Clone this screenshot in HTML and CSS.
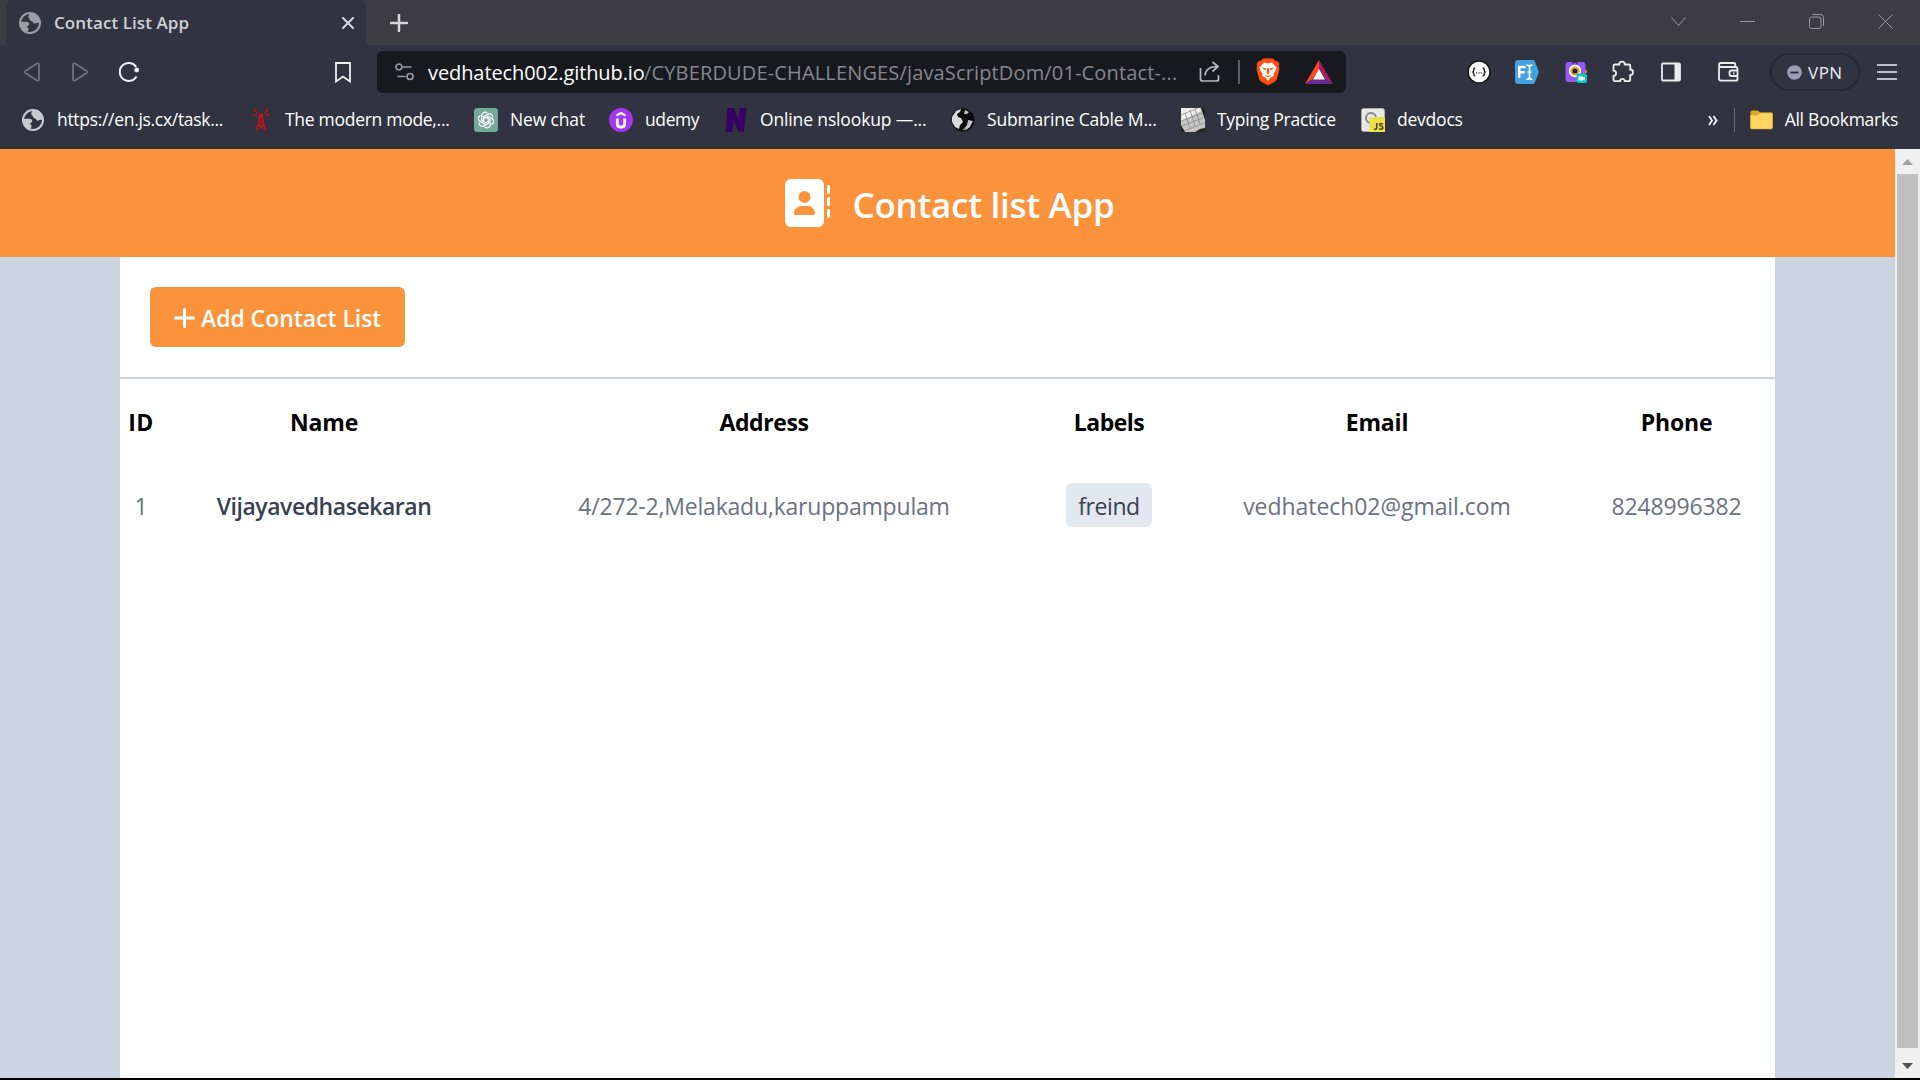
FILE: index.html
```html
<!DOCTYPE html>
<html lang="en">
<head>
<meta charset="utf-8">
<title>Contact List App</title>
<link rel="stylesheet" href="styles.css">
</head>
<body>
<svg class="defs" aria-hidden="true">
  <symbol id="globe" viewBox="0 0 22 22">
    <circle cx="11" cy="11" r="10" fill="none" stroke="currentColor" stroke-width="2"/>
    <path fill="currentColor" d="M11.6 1.4C10 2.600 9 3.500 9.300 5.200c.3 1.500 1.800 1 1.700 2.500C10.900 9.300 13.300 8.700 14 10.300c.6 1.500 2.400 1.700 3.200.9.700-.7 1.900-.5 3-.2C21.700 5.500 17.500 1.300 11.600 1.400z"/>
    <path fill="currentColor" d="M1.500 9.700h5.700c2.400 0 3.300 1.500 3.100 2.700-.2 1.300-1.900.9-2.200 2.200-.2 1.200 1.600 1.100 1.500 2.500-.1 1.400-1 2.500-2.300 2.900C2.500 18.500.800 13.500 1.500 9.700z"/>
  </symbol>
  <symbol id="petal" viewBox="0 0 24 24"><path d="M12 9.300l4.200 2.400v4.800a3.200 3.200 0 0 1-5.300 2.500" fill="none" stroke="#fff" stroke-width="1.300"/></symbol>
</svg>
<div class="browser">
  <div class="tabstrip">
    <div class="tab">
      <svg class="tab-icon"><use href="#globe"/></svg>
      <span class="tab-title">Contact List App</span>
      <svg class="tab-close" viewBox="0 0 12 12"><path d="M1 1l10 10M11 1L1 11" stroke="#d6d6da" stroke-width="2" stroke-linecap="round"/></svg>
    </div>
    <svg class="new-tab" viewBox="0 0 18 18"><path d="M9 1v16M1 9h16" stroke="#d8d8da" stroke-width="2.500" stroke-linecap="round"/></svg>
    <div class="window-controls">
      <svg viewBox="0 0 15 15"><path d="M.5 3.500l7 8 7-8"/></svg>
      <svg viewBox="0 0 15 15"><path d="M0 7.500h15"/></svg>
      <svg viewBox="0 0 15 15"><rect x=".5" y="3" width="11.500" height="11.500" rx="2"/><path d="M3.500.5h8a3 3 0 0 1 3 3v8.500"/></svg>
      <svg viewBox="0 0 15 15"><path d="M.5.5l14 14M14.500.5l-14 14"/></svg>
    </div>
  </div>

  <div class="toolbar">
    <div class="nav">
      <svg class="dim" width="16" height="20" viewBox="0 0 16 20"><path d="M15 3v14q0 2.500-2.300 1.200L1.700 11.300Q0 10 1.700 8.700l11-6.900Q15 .5 15 3z"/></svg>
      <svg class="dim" width="16" height="20" viewBox="0 0 16 20"><path d="M1 3v14q0 2.500 2.300 1.200l11-6.900q1.700-1.300 0-2.600l-11-6.900Q1 .5 1 3z"/></svg>
      <svg class="reload" width="21" height="20" viewBox="0 0 21 20"><path d="M17.200 5A9 9 0 1 0 17.500 14.500"/><circle cx="17.700" cy="8" r="2.400" fill="#f0f0f2" stroke="none"/></svg>
      <svg class="bookmark-flag" width="16" height="21" viewBox="0 0 16 21"><path d="M1 1h14v18.500l-7-5-7 5z"/></svg>
    </div>
    <div class="url">
      <svg class="perm" width="19" height="18" viewBox="0 0 19 18"><circle cx="4" cy="4" r="3"/><path d="M8 4h8.500M2.500 13.500h8"/><circle cx="15" cy="13.500" r="3"/></svg>
      <span class="host">vedhatech002.github.io</span><span class="path">/CYBERDUDE-CHALLENGES/javaScriptDom/01-Contact-...</span>
      <svg class="share" width="22" height="22" viewBox="0 0 22 22"><path d="M1.500 7v11q0 2 2 2h14q2 0 2-2v-4M6 14.500C6.500 9 10 5.500 18.500 5.500M13.500 1l5.500 4.500-5.500 5"/></svg>
      <span class="url-sep"></span>
      <svg class="lion" width="24" height="28" viewBox="0 0 24 28">
        <path fill="#ff4f0a" d="M7 .5h10l2.500 2.500h2L23.500 6l-.8 2 .8 2.500-2.500 10.500-2 2.500-7 4-7-4-2-2.500L.5 10.500 1.300 8 .5 6 2.500 3h2z"/>
        <path fill="#fff" d="M8 4.500l4 1 4-1 4.500 5-1 3.500-2 2.500.3 2.500-3.300 1.500-2.500 3.500-2.500-3.500-3.300-1.500.3-2.500-2-2.500-1-3.500z"/>
        <path fill="#ff4f0a" d="M5.500 9.500l4.800 1-1 2zM18.500 9.500l-4.800 1 1 2zM11.200 10h1.600l.5 5-1.300 1.500-1.300-1.500zM8 16.500l4 1.500 4-1.500-4 3z"/>
      </svg>
      <svg class="bat" width="28" height="24" viewBox="0 0 28 24"><path fill="#ff4724" d="M14 0v10L8 19 0 24z"/><path fill="#9e1f63" d="M14 0l14 24-8-5-6-9z"/><path fill="#662d91" d="M0 24l8-5h12l8 5z"/><path fill="#fff" d="M14 9l6 10.500H8z"/></svg>
    </div>
    <div class="extensions">
      <svg width="24" height="24" viewBox="0 0 24 24"><circle cx="12" cy="12" r="11" fill="#fff" stroke="#151518" stroke-width="1.500"/><path d="M8.300 8q-1.600 0-1.600 1.700v.8q0 1.300-1.300 1.500 1.300.2 1.300 1.500v.8q0 1.700 1.600 1.700M15.700 8q1.600 0 1.600 1.700v.8q0 1.300 1.300 1.500-1.300.2-1.300 1.500v.8q0 1.700-1.600 1.700" fill="none" stroke="#222" stroke-width="1.500"/><path d="M9 12.800h1.200M11.400 12.800h1.200M13.800 12.800H15" stroke="#333" stroke-width="1.200"/></svg>
      <svg width="24" height="24" viewBox="0 0 24 24"><path fill="#43a1de" d="M3 0h14.500q1.500 0 2.200 1.300L24 12l-4.300 10.700Q19 24 17.500 24H3q-3 0-3-3V3q0-3 3-3z"/><path d="M4.200 18V7h6.500M4.200 12.300h5.500" fill="none" stroke="#fff" stroke-width="2.400"/><path d="M11.500 5q3 0 3 2v10q0 2.500-3 2.500M17.500 5q-3 0-3 2v10q0 2.500 3 2.500M12.500 12h4" fill="none" stroke="#fff" stroke-width="1.600"/></svg>
      <svg width="24" height="24" viewBox="0 0 24 24"><rect x="1.500" y="2" width="20" height="20" rx="3" fill="#9858f7"/><path d="M8.500 3.500L11 1.500l2.500 2" fill="none" stroke="#33254d" stroke-width="1.500"/><path d="M22 10v3" stroke="#f49a12" stroke-width="1.500"/><circle cx="11" cy="11" r="6.200" fill="#fff"/><circle cx="11" cy="11" r="3.600" fill="#222" stroke="#f6a21d" stroke-width="2"/><rect x="12.500" y="13.500" width="10.500" height="9.500" rx="2.500" fill="#08c9bd"/><path d="M14.500 16.500h4.500v1l2-1v4l-2-1v1h-4.500z" fill="#fff"/></svg>
      <svg class="line" width="24" height="24" viewBox="0 0 24 24"><path d="M4 4.500h4.200a2.800 2.800 0 0 1 5.600 0H18q1.200 0 1.200 1.200V9.500a2.800 2.800 0 0 1 0 5.600V20q0 1.200-1.200 1.200h-4.200a2.300 2.300 0 0 0-4.600 0H3.700q-1.200 0-1.200-1.200v-4.200a2.600 2.600 0 0 0 0-5.200V5.700Q2.500 4.500 4 4.500z"/></svg>
      <svg class="line" width="20" height="20" viewBox="0 0 20 20"><rect x="1" y="1.500" width="18" height="17" rx="1"/><path d="M13.500 1h5.500v18h-5.500z" fill="#ededf0" stroke="none"/></svg>
      <svg class="line" width="21" height="20" viewBox="0 0 21 20"><path d="M1 4.500v12q0 2.200 2.200 2.200h14.600q1.700 0 1.700-1.700V6.500Q19.500 5 18 5H2.500Q1 4.500 1 3q0-2 2-2h12.500q1.800 0 1.800 1.500V5M19.500 8.500h-6q-2 0-2 2v1.500q0 2 2 2h6M15 11.300h1.500"/></svg>
    </div>
    <div class="vpn"><svg width="15" height="15" viewBox="0 0 15 15"><circle cx="7.500" cy="7.500" r="7.300" fill="#9a9db4"/><path d="M3.500 7.500h8" stroke="#252733" stroke-width="1.800"/></svg><span>VPN</span></div>
    <svg class="menu" width="20" height="16" viewBox="0 0 20 16"><path d="M0 1h20M0 8h20M0 15h20" stroke="#ededf0" stroke-width="1.700"/></svg>
  </div>

  <div class="bookmarks">
    <div class="bm bm-task"><svg class="light"><use href="#globe" x="1" y="1" width="22" height="22"/></svg><span>https://en.js.cx/task...</span></div>
    <div class="bm bm-modern"><svg viewBox="0 0 24 24" fill="none" stroke="#c5141d"><path stroke-width="1.500" d="M11 8.500L7.500 23M13 8.500L16.500 23"/><path stroke-width="1" d="M10 13h4M9 17.500h6M10 13l5 4.500-7 4M14 13l-5 4.500 7 4"/><circle cx="12" cy="8" r="2" fill="#c5141d"/><path stroke-width="1.300" d="M8.500 5.500L5 1M15.500 5.500L19 1M7.500 8L3 6.500M16.500 8L21 6.500"/></svg><span>The modern mode,...</span></div>
    <div class="bm bm-chat"><svg viewBox="0 0 24 24"><rect width="24" height="24" rx="3.500" fill="#75a99c"/><use href="#petal"/><use href="#petal" transform="rotate(60 12 12)"/><use href="#petal" transform="rotate(120 12 12)"/><use href="#petal" transform="rotate(180 12 12)"/><use href="#petal" transform="rotate(240 12 12)"/><use href="#petal" transform="rotate(300 12 12)"/></svg><span>New chat</span></div>
    <div class="bm bm-udemy"><svg viewBox="0 0 24 24"><circle cx="12" cy="12" r="12" fill="#a435f0"/><path d="M8.300 10.500v5.200q0 3.500 3.700 3.500t3.700-3.500v-5.200" fill="none" stroke="#fff" stroke-width="2.800"/><path d="M7.500 7.500L12 5l4.500 2.500" fill="none" stroke="#fff" stroke-width="2.200"/></svg><span>udemy</span></div>
    <div class="bm bm-lookup"><svg viewBox="0 0 24 24"><path fill="#380063" d="M3.500 0H10l4.500 11L16 0h6.500L20 23.500h-5.500L9.500 13 8 24H1.500z"/></svg><span>Online nslookup —...</span></div>
    <div class="bm bm-cable"><svg viewBox="0 0 24 24"><circle cx="12" cy="12" r="11.500" fill="#0a0a0b"/><path fill="#d9d9dc" d="M1 9l4-6 5-2-1 3-3 2 1 3 3 1 2 4-3 3-1 4-4-2-3-5z"/><path fill="#c3c3c7" d="M14 2l4 2-2 2-3 0zM17 12l5 1-3 6-4 3-2-1 3-4z"/><path fill="#77777c" d="M11 22l3-3 1 3.500z"/></svg><span>Submarine Cable M...</span></div>
    <div class="bm bm-typing"><svg viewBox="0 0 24 24"><path fill="#c4c4c4" d="M0 0h24v24H0z"/><path fill="#eee" d="M0 0h19l1 3-12 6-8 4z"/><path stroke="#8a8a8a" stroke-width=".8" fill="none" d="M0 7L17 0M0 13l21-8M1 18l21-8M3 23l20-8M4 5l5 15M9 2l5 16M14 1l5 15"/><path fill="#242424" d="M20 0h4v12zM0 17l4 7H0zM14 24l5-3 5-1v4z"/></svg><span>Typing Practice</span></div>
    <div class="bm bm-docs"><svg viewBox="0 0 24 24"><rect x=".5" y=".5" width="23" height="23" rx="2" fill="#e8e8e8" stroke="#aaa"/><circle cx="10" cy="10" r="5" fill="none" stroke="#888" stroke-width="2"/><path fill="#f0dc4e" d="M8.500 9H24v15H8.500z"/><path d="M15.800 15v4.700q0 2-2.800 1.500M22 16q-3.300-1.200-3.300.5 0 1 1.600 1.500 1.700.5 1.500 2-.4 1.800-3.600.7" fill="none" stroke="#57501e" stroke-width="1.700"/></svg><span>devdocs</span></div>
    <div class="bm-end">
      <svg class="more" width="10" height="11" viewBox="0 0 10 11"><path d="M1 1l3 4.500L1 10M5.500 1l3 4.500-3 4.500" fill="none" stroke="#f0f0f2" stroke-width="1.900"/></svg>
      <span class="bm-sep"></span>
      <svg class="folder" width="23" height="20" viewBox="0 0 23 20"><path fill="#d9a526" d="M.5 2q0-1.500 1.500-1.500h6L10 2.500h11q1.500 0 1.500 1.500v13H.5z"/><path fill="#ffd55e" stroke="#dba93c" stroke-width=".6" d="M.5 6q0-1 1-1H8l2-2h11.500q1 0 1 1v13.500q0 1.500-1.500 1.500H2Q.5 19 .5 17.500z"/></svg>
      <span class="all">All Bookmarks</span>
    </div>
  </div>

  <div class="viewport">
    <div class="page">
      <header class="app-header">
        <svg width="48" height="48" viewBox="0 0 512 512" fill="#fff"><path d="M96 0C60.700 0 32 28.700 32 64v384c0 35.300 28.700 64 64 64h288c35.300 0 64-28.700 64-64V64c0-35.300-28.700-64-64-64H96zm112 288h64c44.200 0 80 35.800 80 80 0 8.800-7.200 16-16 16H144c-8.800 0-16-7.200-16-16 0-44.200 35.800-80 80-80zm-32-96a64 64 0 1 1 128 0 64 64 0 1 1-128 0zM512 80c0-8.800-7.200-16-16-16s-16 7.200-16 16v64c0 8.800 7.200 16 16 16s16-7.200 16-16V80zm-16 112c-8.800 0-16 7.200-16 16v64c0 8.800 7.200 16 16 16s16-7.200 16-16v-64c0-8.800-7.200-16-16-16zm16 144c0-8.800-7.200-16-16-16s-16 7.200-16 16v64c0 8.800 7.200 16 16 16s16-7.200 16-16v-64z"/></svg>
        <h1>Contact list App</h1>
      </header>
      <main class="container">
        <div class="actions">
          <button class="add"><svg width="21" height="20" viewBox="0 0 21 20"><path d="M10.500 1.500v17M1.500 10h18" stroke="#fff" stroke-width="3" stroke-linecap="round"/></svg><span>Add Contact List</span></button>
        </div>
        <table class="contacts">
          <colgroup><col class="c-id"><col class="c-name"><col class="c-address"><col class="c-label"><col class="c-email"><col class="c-phone"></colgroup>
          <thead><tr><th class="h-id">ID</th><th class="h-name">Name</th><th class="h-address">Address</th><th class="h-label">Labels</th><th class="h-email">Email</th><th class="h-phone">Phone</th></tr></thead>
          <tbody><tr><td>1</td><td class="name">Vijayavedhasekaran</td><td class="address">4/272-2,Melakadu,karuppampulam</td><td><span class="badge">freind</span></td><td class="email">vedhatech02@gmail.com</td><td class="phone">8248996382</td></tr></tbody>
        </table>
      </main>
    </div>
    <div class="scrollbar">
      <svg width="11" height="6" viewBox="0 0 11 6"><path d="M5.500 0L11 6H0z" fill="#a3a3a3"/></svg>
      <div class="thumb"></div>
      <svg width="11" height="6" viewBox="0 0 11 6"><path d="M0 0h11L5.500 6z" fill="#505050"/></svg>
    </div>
  </div>
</div>
</body>
</html>
```
FILE: styles.css
```css
* { box-sizing: border-box; }
body { margin: 0; font-family: "Open Sans", "Noto Sans", sans-serif; background: #000; overflow: hidden; }
svg { display: block; flex: none; }
.defs { position: absolute; width: 0; height: 0; }
.browser { display: flex; flex-direction: column; width: 1920px; height: 1080px; border-bottom: 2px solid #000; white-space: nowrap; }

/* tab strip */
.tabstrip { flex: none; height: 45px; display: flex; align-items: center; background: #3d3c43; padding-left: 6px; }
.tab { width: 360px; height: 45px; display: flex; align-items: center; padding: 0 12px 0 13px; background: #313341; border-radius: 7px 7px 0 0; }
.tab-icon { width: 22px; height: 22px; color: #9b9ea6; }
.tab-title { margin-left: 13px; flex: 1; font-size: 17px; font-weight: 600; line-height: 24px; letter-spacing: .07px; color: #cfcfd3; }
.tab-close { width: 12px; height: 12px; }
.new-tab { width: 18px; height: 18px; margin-left: 24px; }
.window-controls { margin-left: auto; display: flex; gap: 54px; padding-right: 27px; padding-bottom: 2px; }
.window-controls svg { width: 15px; height: 15px; fill: none; stroke: #9a999e; stroke-width: 1; }

/* toolbar */
.toolbar { flex: none; height: 54px; display: flex; align-items: center; background: #313341; color: #ededf0; }
.nav { width: 377px; display: flex; align-items: center; padding-left: 24px; }
.nav svg { fill: none; stroke: #f0f0f2; stroke-width: 1.8; }
.nav .dim { stroke: #6f717d; margin-right: 32px; }
.nav .reload { stroke-width: 2; margin-left: -1px; }
.nav .bookmark-flag { margin-left: 195px; }
.url { width: 969px; height: 42px; display: flex; align-items: center; padding-left: 18px; background: #17191f; border-radius: 6px; font-size: 20px; line-height: 28px; }
.perm { fill: none; stroke: #9899a0; stroke-width: 1.7; }
.host { width: 216px; margin-left: 14px; padding-top: 1px; color: #fff; letter-spacing: -.09px; }
.path { width: 555px; padding-top: 1px; color: #85878d; letter-spacing: .15px; }
.share { fill: none; stroke: #b9babf; stroke-width: 1.7; }
.url-sep { width: 2px; height: 24px; margin-left: 17px; background: #5d5f66; }
.lion { margin-left: 16px; }
.bat { margin-left: 25px; }
.extensions { display: flex; align-items: center; margin-left: 121px; }
.extensions .line { fill: none; stroke: #ededf0; stroke-width: 1.8; }
.extensions svg:nth-child(2) { margin-left: 24px; }
.extensions svg:nth-child(3) { margin-left: 25px; }
.extensions svg:nth-child(4) { margin-left: 23px; }
.extensions svg:nth-child(5) { margin-left: 26px; }
.extensions svg:nth-child(6) { margin-left: 37px; }
.vpn { width: 90px; height: 38px; margin-left: 31px; display: flex; align-items: center; padding-left: 15px; gap: 6px; border: 2px solid #262834; border-radius: 19px; font-size: 17px; line-height: 24px; letter-spacing: .5px; }
.vpn span { padding-top: 1px; }
.menu { margin-left: 17px; }

/* bookmarks bar */
.bookmarks { flex: none; height: 50px; display: flex; align-items: center; padding: 0 0 8px 21px; background: #313341; color: #fff; font-size: 17.5px; line-height: 24px; }
.bm { display: flex; align-items: center; gap: 12px; }
.bm span, .all { padding-bottom: 2px; }
.bm svg { width: 24px; height: 24px; }
.light { color: #c8cacf; }
.bm-task { width: 228px; letter-spacing: -.31px; }
.bm-modern { width: 225px; letter-spacing: -.29px; }
.bm-chat { width: 135px; letter-spacing: -.15px; }
.bm-udemy { width: 115px; letter-spacing: -.4px; }
.bm-lookup { width: 227px; letter-spacing: -.14px; }
.bm-cable { width: 230px; letter-spacing: -.19px; }
.bm-typing { width: 180px; letter-spacing: -.28px; }
.bm-docs { letter-spacing: -.22px; }
.bm-end { margin-left: auto; display: flex; align-items: center; padding-right: 22px; }
.bm-sep { width: 1px; height: 24px; margin: 0 15px 0 16px; background: #696b78; }
.all { margin-left: 12px; letter-spacing: -.25px; }

/* page */
.viewport { flex: 1; display: flex; min-height: 0; }
.page { width: 1895px; display: flex; flex-direction: column; background: #cbd5e1; }
.app-header { flex: none; height: 108px; display: flex; align-items: center; justify-content: center; gap: 23px; padding-left: 1px; background: #fb923c; color: #fff; }
.app-header h1 { margin: 4px 0 0; font-size: 35px; font-weight: 600; line-height: 48px; letter-spacing: -.28px; }
.container { flex: 1; width: 1655px; margin: 0 auto; background: #fff; }
.actions { height: 122px; padding: 30px; border-bottom: 2px solid #cbd5e1; }
.add { width: 255px; height: 60px; display: flex; align-items: center; padding: 2px 0 0 24px; gap: 6px; border: 0; border-radius: 6px; background: #fb923c; color: #fff; font: 600 23px/32px "Open Sans", "Noto Sans", sans-serif; letter-spacing: -.05px; }
.contacts { width: 1655px; table-layout: fixed; border-collapse: collapse; font-size: 23px; line-height: 32px; text-align: center; color: #6b7280; }
.c-id { width: 42px; }
.c-name { width: 324px; }
.c-address { width: 556px; }
.c-label { width: 134px; }
.c-email { width: 402px; }
.c-phone { width: 197px; }
.contacts th, .contacts td { padding: 0; vertical-align: middle; }
.contacts th { height: 86px; font-weight: 700; color: #000; }
.contacts td { height: 82px; }
.h-id { letter-spacing: .5px; }
.h-name, .h-email, .h-phone { letter-spacing: -.16px; }
.h-address { letter-spacing: -.4px; }
.h-label { letter-spacing: -.5px; }
.contacts .name { font-weight: 600; color: #374151; letter-spacing: -.45px; }
.address { letter-spacing: -.2px; }
.email { letter-spacing: -.06px; }
.phone { letter-spacing: -.15px; }
.badge { display: block; width: 86px; height: 44px; margin: -2px auto 0; padding-top: 7px; border-radius: 6px; background: #e2e8f0; color: #374151; letter-spacing: -.45px; }

.scrollbar { width: 25px; display: flex; flex-direction: column; align-items: center; padding: 10px 0 9px; background: #f0f0f0; }
.thumb { width: 21px; height: 874px; margin: 9px 0 15px; background: #c1c1c1; }
```
